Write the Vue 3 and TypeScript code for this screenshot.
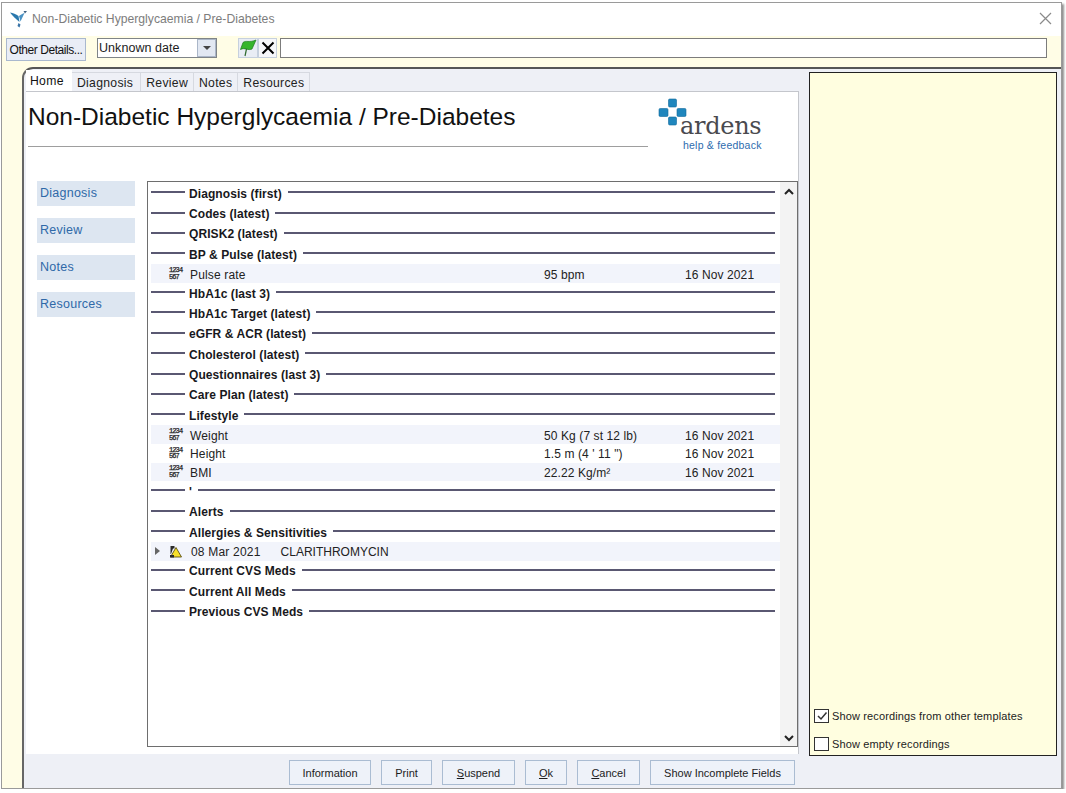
<script setup lang="ts">
type Line =
  | { kind: 'head'; label: string }
  | { kind: 'value'; label: string; value: string; date: string; odd: boolean }
  | { kind: 'allergy'; date: string; label: string }

const lines: Line[] = [
  { kind: 'head', label: 'Diagnosis (first)' },
  { kind: 'head', label: 'Codes (latest)' },
  { kind: 'head', label: 'QRISK2 (latest)' },
  { kind: 'head', label: 'BP & Pulse (latest)' },
  { kind: 'value', label: 'Pulse rate', value: '95 bpm', date: '16 Nov 2021', odd: true },
  { kind: 'head', label: 'HbA1c (last 3)' },
  { kind: 'head', label: 'HbA1c Target (latest)' },
  { kind: 'head', label: 'eGFR & ACR (latest)' },
  { kind: 'head', label: 'Cholesterol (latest)' },
  { kind: 'head', label: 'Questionnaires (last 3)' },
  { kind: 'head', label: 'Care Plan (latest)' },
  { kind: 'head', label: 'Lifestyle' },
  { kind: 'value', label: 'Weight', value: '50 Kg (7 st 12 lb)', date: '16 Nov 2021', odd: true },
  { kind: 'value', label: 'Height', value: "1.5 m (4 ' 11 \")", date: '16 Nov 2021', odd: false },
  { kind: 'value', label: 'BMI', value: '22.22 Kg/m²', date: '16 Nov 2021', odd: true },
  { kind: 'head', label: "'" },
  { kind: 'head', label: 'Alerts' },
  { kind: 'head', label: 'Allergies & Sensitivities' },
  { kind: 'allergy', date: '08 Mar 2021', label: 'CLARITHROMYCIN' },
  { kind: 'head', label: 'Current CVS Meds' },
  { kind: 'head', label: 'Current All Meds' },
  { kind: 'head', label: 'Previous CVS Meds' },
]
const tabs = ['Diagnosis', 'Review', 'Notes', 'Resources']
</script>

<template>
  <div class="window">
    <header class="titlebar">
      <svg class="applogo" width="18" height="18" viewBox="0 0 18 18">
        <path d="M1 2.5 C4 3 7 4 9.5 6 L10.5 12 C7 9 3.5 6 1 2.5 Z" fill="#2a78ad" />
        <path d="M10 6 C12 4.5 13.5 3.5 15.5 3 L11.5 11.5 Z" fill="#4b93c4" />
        <path d="M14.5 1 L18 1 L16 3.5 Z" fill="#3c5f80" />
        <path d="M9.5 13 L11.5 14.5 L10.5 17.5 L8.5 16 Z" fill="#3a74a8" />
      </svg>
      <span class="wintitle">Non-Diabetic Hyperglycaemia / Pre-Diabetes</span>
      <svg class="close" width="13" height="13" viewBox="0 0 13 13">
        <path d="M1 1 L12 12 M12 1 L1 12" stroke="#8a8a8a" stroke-width="1.2" fill="none" />
      </svg>
    </header>

    <div class="toolbar">
      <button class="other">Other Details...</button>
      <div class="combo">
        <span class="combotext">Unknown date</span>
        <span class="comboarrow"><i></i></span>
      </div>
      <div class="flagbtn">
        <svg width="18" height="18" viewBox="0 0 18 18">
          <path d="M4 3.5 C7 1 10 4 17 1 L13 10 C9 12 6 8 1.5 10.5 Z" fill="#36b52c" stroke="#1d7a1d" stroke-width="0.7" />
          <path d="M7.5 10 L6 17" stroke="#2f6a2f" stroke-width="1.2" />
        </svg>
      </div>
      <div class="xbtn">
        <svg width="14" height="14" viewBox="0 0 14 14">
          <path d="M1.5 1.5 L12.5 12.5 M12.5 1.5 L1.5 12.5" stroke="#000" stroke-width="2" />
        </svg>
      </div>
      <div class="textinput"></div>
    </div>

    <div class="workspace">
      <section class="left">
        <nav class="tabs">
          <span class="tab active">Home</span>
          <span v-for="t in tabs" :key="t" class="tab">{{ t }}</span>
        </nav>
        <div class="page">
          <div class="pagehead">
            <div class="headline">
              <h1>Non-Diabetic Hyperglycaemia / Pre-Diabetes</h1>
              <div class="rule"></div>
            </div>
            <div class="brand">
              <svg class="cross" width="30" height="30" viewBox="0 0 30 30">
                <g fill="#1f86bd" stroke="#136a9c" stroke-width="0.6">
                  <rect x="10.5" y="1" width="8" height="8" rx="1.2" />
                  <rect x="1" y="10.5" width="9" height="8" rx="1.2" />
                  <rect x="19" y="10.5" width="9" height="8" rx="1.2" />
                  <rect x="10.5" y="19" width="8" height="8" rx="1.2" />
                </g>
              </svg>
              <div class="wordmark">ardens</div>
              <div class="help">help &amp; feedback</div>
            </div>
          </div>

          <div class="pagebody">
            <aside class="sidenav">
              <a v-for="t in tabs" :key="t" class="navitem">{{ t }}</a>
            </aside>
            <div class="list">
              <div class="rows">
                <template v-for="(l, i) in lines" :key="i">
                  <div v-if="l.kind === 'head'" class="head">
                    <span class="stub"></span>
                    <b>{{ l.label }}</b>
                    <span class="bar"></span>
                  </div>
                  <div v-else-if="l.kind === 'value'" class="row" :class="{ odd: l.odd }">
                    <span class="numicon">1234<br />567</span>
                    <span class="rlabel">{{ l.label }}</span>
                    <span class="rvalue">{{ l.value }}</span>
                    <span class="rdate">{{ l.date }}</span>
                  </div>
                  <div v-else class="row odd allergy">
                    <span class="tri"></span>
                    <svg class="warn" width="13" height="13" viewBox="0 0 13 13">
                      <path d="M7 2.5 L12.5 12 L1.5 12 Z" fill="#f7e02a" stroke="#4a3c00" stroke-width="0.8" />
                      <path d="M1.5 1 H5.5 V3.5 H4 L2 9 H1.5 Z" fill="#2a2a2a" />
                      <path d="M1 10 H5 V12.5 H1 Z" fill="#2a2a2a" />
                    </svg>
                    <span class="adate">{{ l.date }}</span>
                    <span class="aname">{{ l.label }}</span>
                  </div>
                </template>
              </div>
              <div class="scroll">
                <svg width="10" height="7" viewBox="0 0 10 7"><path d="M1 6 L5 2 L9 6" fill="none" stroke="#222" stroke-width="2" /></svg>
                <svg width="10" height="7" viewBox="0 0 10 7"><path d="M1 1 L5 5 L9 1" fill="none" stroke="#222" stroke-width="2" /></svg>
              </div>
            </div>
          </div>
        </div>
        <footer class="actions">
          <button class="act w82">Information</button>
          <button class="act w51">Print</button>
          <button class="act w73"><u>S</u>uspend</button>
          <button class="act w42"><u>O</u>k</button>
          <button class="act w63"><u>C</u>ancel</button>
          <button class="act w145">Show Incomplete Fields</button>
        </footer>
      </section>

      <aside class="notes">
        <label class="check first">
          <span class="box">
            <svg width="12" height="12" viewBox="0 0 12 12"><path d="M2 6 L5 9 L10.5 2.5" fill="none" stroke="#333" stroke-width="1.5" /></svg>
          </span>
          Show recordings from other templates
        </label>
        <label class="check">
          <span class="box"></span>
          Show empty recordings
        </label>
      </aside>
    </div>
  </div>
</template>

<style>
html, body { margin: 0; background: #fff; }
</style>

<style scoped>
* { box-sizing: border-box; }
.window {
  width: 1061px;
  height: 787px;
  margin: 2px 0 0 1px;
  border: 1px solid #9a9a9a;
  box-shadow: 2px 2px 2px #8f8f8f;
  display: flex;
  flex-direction: column;
  background: #fffde6;
  font-family: "Liberation Sans", Arial, sans-serif;
  font-size: 12px;
  color: #1c1c1c;
  overflow: hidden;
}
.titlebar {
  height: 33px;
  background: #fff;
  display: flex;
  align-items: center;
  padding: 0 9px 2px 7px;
  flex: none;
}
.applogo { margin-right: 5px; margin-top: 1px; }
.wintitle { color: #7d7d7d; font-size: 12.2px; flex: 1; }
.toolbar {
  height: 31px;
  flex: none;
  background: #fffde6;
  display: flex;
  align-items: flex-start;
  padding: 2px 0 0 4px;
}
.other {
  width: 80px;
  height: 23px;
  padding: 0;
  background: #e9edf6;
  border: 1px solid #a9b8ce;
  font: 12px "Liberation Sans", Arial, sans-serif;
  color: #111;
  letter-spacing: -0.45px;
}
.combo {
  width: 120px;
  height: 20px;
  margin-left: 11px;
  border: 1px solid #7f8488;
  background: #fff;
  display: flex;
  justify-content: space-between;
}
.combotext { font-size: 12.5px; padding: 2px 0 0 1px; letter-spacing: 0.05px; }
.comboarrow {
  width: 19px;
  background: #e2e8f2;
  border: 1px solid #aab6c8;
  display: flex;
  align-items: center;
  justify-content: center;
}
.comboarrow i {
  border-left: 4px solid transparent;
  border-right: 4px solid transparent;
  border-top: 4px solid #444;
}
.flagbtn, .xbtn {
  width: 20px;
  height: 20px;
  display: flex;
  align-items: center;
  justify-content: center;
  border: 1px solid #c6d0de;
  background: #e9edf5;
}
.flagbtn { margin-left: 21px; }
.xbtn { background: #f6f7fa; width: 19px; }
.textinput {
  width: 767px;
  height: 20px;
  margin-left: 3px;
  background: #fff;
  border: 1.5px solid #7c7c7c;
}
.workspace {
  flex: 1;
  min-height: 0;
  margin-left: 20px;
  background: #eef0f6;
  border-left: 2px solid #666;
  border-top: 2px solid #555;
  border-top-left-radius: 11px;
  display: flex;
  padding-top: 3px;
}
.left {
  width: 784px;
  flex: none;
  display: flex;
  flex-direction: column;
}
.tabs {
  height: 19px;
  flex: none;
  display: flex;
  align-items: flex-end;
  padding-left: 2px;
}
.tab {
  height: 19px;
  padding: 0 5px;
  background: #eef0f6;
  border: 1px solid #d6d9e0;
  border-left: 0;
  border-bottom: 0;
  font-size: 12.2px;
  line-height: 21px;
  letter-spacing: 0.3px;
  color: #222;
  flex: none;
}
.tab:nth-child(2) { padding-right: 7px; }
.tab.active {
  height: 21px;
  width: 46px;
  padding: 0 0 0 4px;
  background: #fff;
  border: 0;
  line-height: 22px;
  color: #111;
}
.page {
  width: 773px;
  margin-left: 2px;
  flex: 1;
  min-height: 0;
  background: #fff;
  border-top: 1px solid #c4c6cc;
  border-right: 1px solid #c4c6cc;
  display: flex;
  flex-direction: column;
}
.pagehead { height: 89px; flex: none; display: flex; }
.headline { width: 622px; padding: 10px 0 0 2px; }
h1 {
  margin: 0;
  font-size: 24.5px;
  font-weight: 400;
  line-height: 30px;
  color: #111;
  white-space: nowrap;
}
.rule { height: 1px; margin-top: 14px; background: #9e9e9e; }
.brand { width: 150px; padding: 4px 0 0 10px; display: flex; flex-direction: column; position: relative; }
.cross { position: absolute; left: 10px; top: 6px; }
.wordmark {
  font-family: "DejaVu Serif", serif;
  font-size: 24px;
  color: #4a4a4f;
  margin: 16px 0 0 22px;
  line-height: 28px;
  letter-spacing: -0.3px;
  font-weight: 400;
}
.help {
  font-size: 10.5px;
  color: #2d6bae;
  margin: -1px 0 0 25px;
  line-height: 12px;
  letter-spacing: 0.22px;
}
.pagebody { flex: 1; min-height: 0; display: flex; }
.sidenav { width: 121px; padding-left: 11px; display: flex; flex-direction: column; gap: 12px; }
.navitem {
  width: 98px;
  height: 25px;
  background: #dde6f1;
  color: #2f69a8;
  font-size: 12.5px;
  line-height: 25px;
  padding-left: 3px;
  letter-spacing: 0.25px;
}
.list {
  width: 651px;
  height: 566px;
  border: 1px solid #6e6e6e;
  display: flex;
  background: #fff;
}
.rows { flex: 1; padding: 1px 0 0 3px; }
.head { height: 20.35px; display: flex; align-items: center; padding-right: 5px; }
.head b {
  font-size: 12px;
  font-weight: 700;
  color: #181820;
  margin: 1px 6px 0 4px;
  white-space: nowrap;
  letter-spacing: 0.08px;
}
.stub { width: 34px; height: 2px; margin-top: -2px; background: #5a5872; flex: none; }
.bar { flex: 1; height: 2px; margin-top: -2px; background: #5a5872; }
.row {
  height: 18.6px;
  display: flex;
  align-items: center;
  color: #222;
  font-size: 12px;
}
.row.odd { background: #f2f4fb; }
.numicon {
  width: 39px;
  padding-left: 18px;
  font: 7px/6.5px "Liberation Mono", monospace;
  -webkit-text-stroke: 0.25px #222;
  flex: none;
  color: #222;
  letter-spacing: -0.9px;
}
.rlabel, .rvalue, .rdate, .adate, .aname { padding-top: 2px; }
.rlabel { width: 354px; letter-spacing: 0.15px; }
.rvalue { width: 141px; letter-spacing: 0.1px; }
.rdate { letter-spacing: 0.1px; }
.tri {
  margin-left: 4px;
  border-left: 5px solid #666;
  border-top: 4px solid transparent;
  border-bottom: 4px solid transparent;
}
.warn { margin-left: 9px; }
.adate { margin: 0 20px 0 9px; letter-spacing: 0.2px; }
.scroll {
  width: 17px;
  background: #f3f3f3;
  display: flex;
  flex-direction: column;
  justify-content: space-between;
  align-items: center;
  padding: 6px 0 4px;
}
.actions {
  flex: none;
  height: 34px;
  display: flex;
  gap: 10px;
  padding: 6px 0 0 265px;
}
.act {
  height: 25px;
  padding: 0;
  background: #eef2f9;
  border: 1px solid #aabcd2;
  font: 11px "Liberation Sans", Arial, sans-serif;
  color: #1c1c1c;
}
.w82 { width: 82px; } .w51 { width: 51px; } .w73 { width: 73px; }
.w42 { width: 42px; } .w63 { width: 63px; } .w145 { width: 145px; }
.notes {
  width: 248px;
  margin: 0 0 32px 1px;
  background: #fffee0;
  border: 1px solid #222;
  display: flex;
  flex-direction: column;
  justify-content: flex-end;
  padding: 0 0 3px 4px;
}
.check { display: flex; align-items: center; gap: 3px; font-size: 11px; color: #222; letter-spacing: 0.13px; height: 16px; }
.check.first { margin-bottom: 12px; }
.box {
  width: 15px;
  height: 14px;
  border: 1px solid #333;
  background: #fff;
  display: flex;
  align-items: center;
  justify-content: center;
}
</style>
